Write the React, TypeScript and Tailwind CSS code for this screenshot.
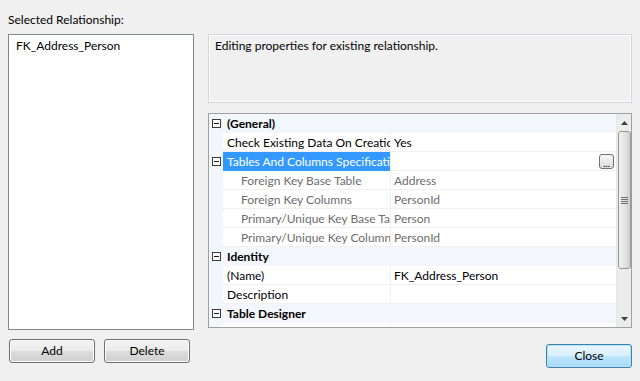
import React from 'react';

const font = { fontFamily: '"Lato", "Noto Sans", sans-serif' };

type Row =
    | { kind: 'cat'; label: string }
    | { kind: 'prop'; name: string; value?: string; sub?: boolean; selected?: boolean; expander?: boolean; dots?: boolean };

const rows: Row[] = [
    { kind: 'cat', label: '(General)' },
    { kind: 'prop', name: 'Check Existing Data On Creation Or Re-Enabling', value: 'Yes' },
    { kind: 'prop', name: 'Tables And Columns Specification', selected: true, expander: true, dots: true },
    { kind: 'prop', name: 'Foreign Key Base Table', value: 'Address', sub: true },
    { kind: 'prop', name: 'Foreign Key Columns', value: 'PersonId', sub: true },
    { kind: 'prop', name: 'Primary/Unique Key Base Table', value: 'Person', sub: true },
    { kind: 'prop', name: 'Primary/Unique Key Columns', value: 'PersonId', sub: true },
    { kind: 'cat', label: 'Identity' },
    { kind: 'prop', name: '(Name)', value: 'FK_Address_Person' },
    { kind: 'prop', name: 'Description', value: '' },
    { kind: 'cat', label: 'Table Designer' },
    { kind: 'prop', name: 'Enforce For Replication', value: 'Yes' },
];

function Minus() {
    return (
        <div className="w-[9px] h-[9px] border border-[#3c3c3c] bg-white flex items-center justify-center">
            <div className="w-[5px] h-px bg-[#1a1a1a]" />
        </div>
    );
}

function GridRow({ row }: { row: Row }) {
    if (row.kind === 'cat') {
        return (
            <div className="flex h-[19px] bg-[#f3f6fb] border-b border-[#f3f6fb]">
                <div className="w-[14px] flex items-center justify-center pl-[1px]">
                    <Minus />
                </div>
                <div className="flex-1 pl-[4px] font-bold text-black leading-[19px]">{row.label}</div>
            </div>
        );
    }
    const textColor = row.sub ? 'text-[#6d6d6d]' : 'text-black';
    return (
        <div className="flex h-[19px]">
            <div className="w-[14px] bg-[#f3f6fb] flex items-center justify-center pl-[1px]">
                {row.expander && <Minus />}
            </div>
            <div
                className={`w-[167px] overflow-hidden whitespace-nowrap leading-[19px] border-b ${
                    row.selected ? 'bg-[#3399ff] text-white border-[#3399ff]' : `bg-white border-[#f0f0f0] ${textColor}`
                } ${row.sub ? 'pl-[18px]' : 'pl-[4px]'}`}
            >
                {row.name}
            </div>
            <div className="w-px bg-[#f0f0f0]" />
            <div className={`flex-1 bg-white border-b border-[#f0f0f0] pl-[3px] leading-[19px] flex items-center ${textColor}`}>
                <span className="flex-1">{row.value}</span>
                {row.dots && (
                    <div className="w-[15px] h-[15px] mr-[2px] rounded-[3px] border border-[#707070] bg-gradient-to-b from-[#f6f6f6] to-[#dedede] flex items-end justify-center text-[10px] leading-[10px] text-black">
                        ...
                    </div>
                )}
            </div>
        </div>
    );
}

function ScrollBar() {
    return (
        <div className="w-[15px] bg-[#ececec] flex flex-col items-center border-l border-[#e6e6e6]">
            <div className="h-[17px] w-full flex items-center justify-center">
                <svg width="7" height="4" viewBox="0 0 7 4">
                    <path d="M0 4 L3.5 0 L7 4 Z" fill="#404040" />
                </svg>
            </div>
            <div className="h-[138px] w-[13px] rounded-[3px] border border-[#979797] bg-gradient-to-r from-[#f0f0f0] via-[#e4e4e4] to-[#cfcfcf] flex items-center justify-center">
                <div className="flex flex-col gap-[1px]">
                    <div className="w-[7px] h-px bg-[#6f6f6f]" />
                    <div className="w-[7px] h-px bg-[#6f6f6f]" />
                    <div className="w-[7px] h-px bg-[#6f6f6f]" />
                    <div className="w-[7px] h-px bg-[#6f6f6f]" />
                </div>
            </div>
            <div className="flex-1" />
            <div className="h-[17px] w-full flex items-center justify-center">
                <svg width="7" height="4" viewBox="0 0 7 4">
                    <path d="M0 0 L3.5 4 L7 0 Z" fill="#404040" />
                </svg>
            </div>
        </div>
    );
}

function WinButton({ children, primary }: { children: React.ReactNode; primary?: boolean }) {
    return (
        <button
            className={`w-[86px] h-[24px] rounded-[3px] border text-[12px] text-black leading-[20px] ${
                primary
                    ? 'border-[#3c7fb1] bg-[linear-gradient(to_bottom,#eaf6fd_0%,#d9f0fc_50%,#bee6fd_51%,#a7d9f5_100%)] shadow-[inset_0_0_0_1px_#b9e3f9]'
                    : 'border-[#707070] bg-[linear-gradient(to_bottom,#f2f2f2_0%,#ebebeb_50%,#dddddd_51%,#cfcfcf_100%)] shadow-[inset_0_0_0_1px_#fcfcfc]'
            }`}
            style={font}
        >
            {children}
        </button>
    );
}

export default function App() {
    return (
        <div className="w-[640px] h-[381px] bg-[#f0f0f0] flex gap-[14px] px-[8px] text-[12px] text-black overflow-hidden" style={font}>
            {/* left column */}
            <div className="w-[186px] flex flex-col">
                <div className="h-[34px] pt-[12px] leading-[16px]">Selected Relationship:</div>
                <div className="h-[296px] bg-white border border-[#828790] px-[7px] pt-[3px] leading-[16px]">
                    FK_Address_Person
                </div>
                <div className="flex gap-[9px] mt-[9px] pl-px">
                    <WinButton>Add</WinButton>
                    <WinButton>Delete</WinButton>
                </div>
            </div>

            {/* right column */}
            <div className="w-[424px] flex flex-col pt-[34px]">
                <div className="h-[69px] border border-[#d3d7db] shadow-[inset_0_0_0_1px_#ffffff] px-[6px] pt-[3px] leading-[16px]">
                    Editing properties for existing relationship.
                </div>
                <div className="mt-[10px] h-[215px] border border-[#a0a0a0] bg-white flex overflow-hidden">
                    <div className="flex-1 flex flex-col overflow-hidden">
                        {rows.map((r, i) => (
                            <GridRow key={i} row={r} />
                        ))}
                    </div>
                    <ScrollBar />
                </div>
                <div className="flex justify-end mt-[16px]">
                    <WinButton primary>Close</WinButton>
                </div>
            </div>
        </div>
    );
}
